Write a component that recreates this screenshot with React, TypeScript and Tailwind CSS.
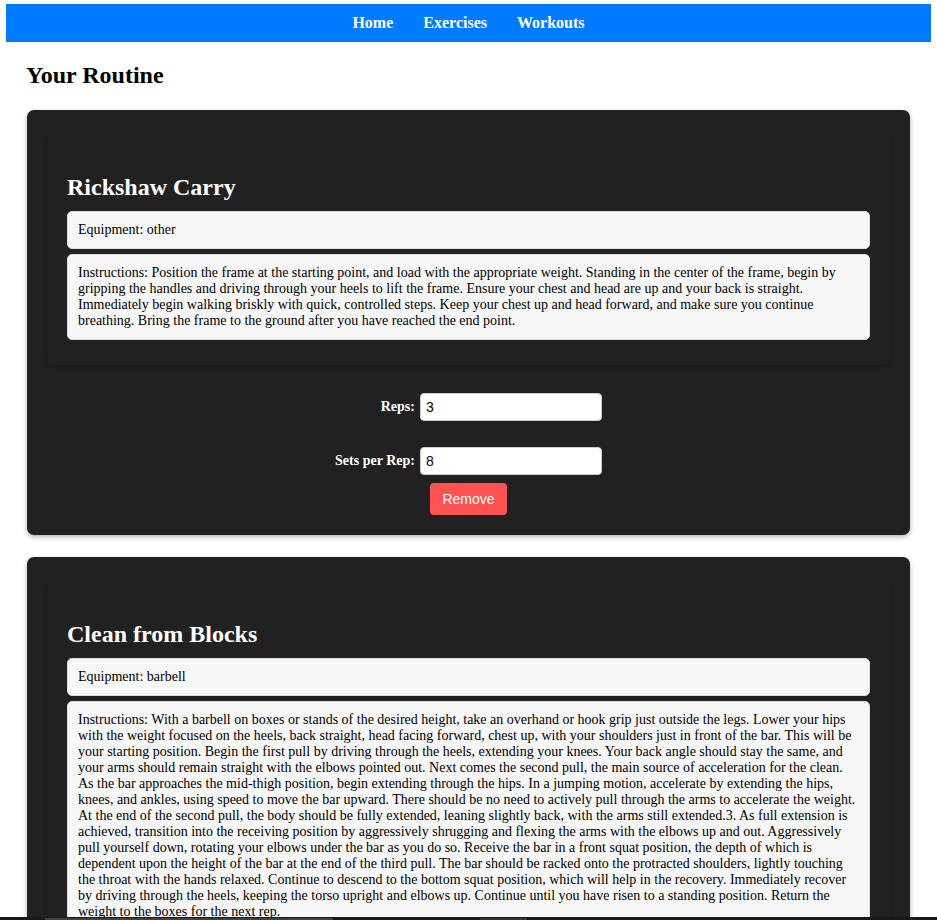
type Exercise = { name: string; equipment: string; lines: string[]; reps?: string; sets?: string };

const exercises: Exercise[] = [
  {
    name: "Rickshaw Carry",
    equipment: "other",
    lines: [
      "Instructions: Position the frame at the starting point, and load with the appropriate weight. Standing in the center of the frame, begin by",
      "gripping the handles and driving through your heels to lift the frame. Ensure your chest and head are up and your back is straight.",
      "Immediately begin walking briskly with quick, controlled steps. Keep your chest up and head forward, and make sure you continue",
      "breathing. Bring the frame to the ground after you have reached the end point.",
    ],
    reps: "3",
    sets: "8",
  },
  {
    name: "Clean from Blocks",
    equipment: "barbell",
    lines: [
      "Instructions: With a barbell on boxes or stands of the desired height, take an overhand or hook grip just outside the legs. Lower your hips",
      "with the weight focused on the heels, back straight, head facing forward, chest up, with your shoulders just in front of the bar. This will be",
      "your starting position. Begin the first pull by driving through the heels, extending your knees. Your back angle should stay the same, and",
      "your arms should remain straight with the elbows pointed out. Next comes the second pull, the main source of acceleration for the clean.",
      "As the bar approaches the mid-thigh position, begin extending through the hips. In a jumping motion, accelerate by extending the hips,",
      "knees, and ankles, using speed to move the bar upward. There should be no need to actively pull through the arms to accelerate the weight.",
      "At the end of the second pull, the body should be fully extended, leaning slightly back, with the arms still extended.3. As full extension is",
      "achieved, transition into the receiving position by aggressively shrugging and flexing the arms with the elbows up and out. Aggressively",
      "pull yourself down, rotating your elbows under the bar as you do so. Receive the bar in a front squat position, the depth of which is",
      "dependent upon the height of the bar at the end of the third pull. The bar should be racked onto the protracted shoulders, lightly touching",
      "the throat with the hands relaxed. Continue to descend to the bottom squat position, which will help in the recovery. Immediately recover",
      "by driving through the heels, keeping the torso upright and elbows up. Continue until you have risen to a standing position. Return the",
      "weight to the boxes for the next rep.",
    ],
  },
];

function Field({ label, value }: { label: string; value: string }) {
  return (
    <label className="flex h-7 items-center justify-end gap-[5px] text-[14px] font-bold text-white">
      <span>{label}</span>
      <input
        defaultValue={value}
        className="h-7 w-[182px] rounded-[4px] border border-[#ccc] bg-white px-[5px] font-['Liberation_Sans',Arial,sans-serif] text-[14px] font-normal text-black outline-none"
      />
    </label>
  );
}

function ExerciseCard({ exercise }: { exercise: Exercise }) {
  return (
    <section className="mb-[22px] rounded-[7px] bg-[#212121] p-5 shadow-[0_2px_5px_rgba(0,0,0,0.3)]">
      <div className="rounded-[8px] px-5 pb-[25px] pt-[43px] shadow-[0_2px_4px_rgba(0,0,0,0.15)]">
        <h2 className="mb-[10px] text-[24px] font-bold leading-7 text-white">{exercise.name}</h2>
        <p className="mb-[5px] rounded-[5px] border border-[#ddd] bg-[#f7f7f7] p-[10px]">Equipment: {exercise.equipment}</p>
        <div className="rounded-[5px] border border-[#ddd] bg-[#f7f7f7] p-[10px]">
          {exercise.lines.map((line) => (
            <p key={line} className="whitespace-nowrap">
              {line}
            </p>
          ))}
        </div>
      </div>
      {exercise.reps && exercise.sets && (
        <div className="flex flex-col items-center pt-7">
          <div className="flex flex-col gap-[26px]">
            <Field label="Reps:" value={exercise.reps} />
            <Field label="Sets per Rep:" value={exercise.sets} />
          </div>
          <button className="mt-2 h-8 w-[77px] rounded-[4px] bg-[#ff5252] font-['Liberation_Sans',Arial,sans-serif] text-[14px] text-white">
            Remove
          </button>
        </div>
      )}
    </section>
  );
}

export default function App() {
  return (
    <div className="flex h-[920px] w-[937px] flex-col overflow-hidden bg-white font-['Liberation_Serif','Times_New_Roman',serif] text-[14px] leading-4 text-black">
      <div className="min-h-0 flex-1 overflow-hidden pl-[6px] pr-[6px] pt-1">
        <nav className="flex h-[38px] items-center justify-center gap-[30px] bg-[#007bff] text-[16px] font-bold text-white">
          <a>Home</a>
          <a>Exercises</a>
          <a>Workouts</a>
        </nav>
        <main className="pl-[21px] pr-[21px] pt-[19px]">
          <h1 className="-ml-px mb-[21px] text-[24px] font-bold leading-7">Your Routine</h1>
          {exercises.map((exercise) => (
            <ExerciseCard key={exercise.name} exercise={exercise} />
          ))}
        </main>
      </div>
      <footer className="flex h-[3px] shrink-0 bg-[#191919] pl-[45px]">
        <span className="mt-px h-[2px] w-[288px] bg-[#414141]" />
        <span className="ml-[147px] mt-px h-[2px] w-[47px] bg-[#353535]" />
      </footer>
    </div>
  );
}
